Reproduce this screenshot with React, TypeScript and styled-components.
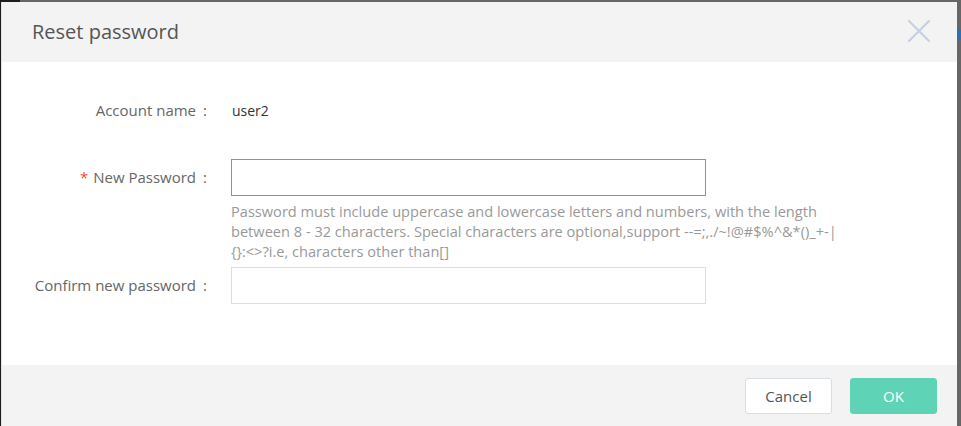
import React from "react";
import styled, { createGlobalStyle } from "styled-components";

const Global = createGlobalStyle`
  html, body { margin: 0; padding: 0; background: #5a5a5a; }
  body { font-family: "Open Sans", "Noto Sans", Arial, sans-serif; }
  * { box-sizing: border-box; }
`;

const Backdrop = styled.div`
  width: 961px;
  height: 426px;
  overflow: hidden;
  background: linear-gradient(to right, #1c1c1c 0 20px, #666 20px);
  padding: 2px 4px 0 1px;
  position: relative;
`;

const RightStrip = styled.div`
  position: absolute;
  right: 0;
  top: 30px;
  width: 4px;
  height: 10px;
  background: #2d6fb0;
`;

const Dialog = styled.div`
  width: 956px;
  height: 424px;
  background: #fff;
  border-left: 1px solid #e3e3e3;
  display: flex;
  flex-direction: column;
  position: relative;
  z-index: 1;
`;

const Header = styled.div`
  height: 60px;
  flex: none;
  background: #f3f3f3;
  display: flex;
  align-items: center;
  justify-content: space-between;
  padding: 0 26px 0 30px;
`;

const Title = styled.div`
  font-size: 20px;
  color: #555;
  margin-top: -2px;
`;

const CloseBtn = styled.button`
  border: 0;
  background: transparent;
  padding: 0;
  width: 24px;
  height: 24px;
  display: flex;
  align-items: center;
  justify-content: center;
  cursor: pointer;
  margin-top: -2px;
`;

const Body = styled.div`
  flex: 1;
  padding: 30px 0 0 0;
  display: flex;
  flex-direction: column;
`;

const Row = styled.div<{ $mt?: number }>`
  display: grid;
  grid-template-columns: 205px 1fr;
  column-gap: 24px;
  align-items: start;
  margin-top: ${(p) => p.$mt ?? 0}px;
`;

const Label = styled.label`
  height: 37px;
  display: flex;
  align-items: center;
  justify-content: flex-end;
  font-size: 15px;
  color: #666;
  white-space: nowrap;
  padding-bottom: 2px;
`;

const Colon = styled.span`
  margin-left: 7px;
`;

const Req = styled.span`
  color: #f5483b;
  margin-right: 5px;
`;

const Value = styled.div`
  height: 37px;
  display: flex;
  align-items: center;
  font-size: 14px;
  color: #333;
  padding-left: 1px;
`;

const Field = styled.div`
  display: flex;
  flex-direction: column;
`;

const Input = styled.input<{ $focus?: boolean }>`
  width: 475px;
  height: 37px;
  border: 1px solid ${(p) => (p.$focus ? "#3fa9f5" : "#d6dee8")};
  outline: none;
  background: #fff;
  font-size: 14px;
  padding: 0 8px;
`;

const Hint = styled.div`
  margin-top: 5px;
  font-size: 14.6px;
  line-height: 20px;
  color: #999;
  white-space: nowrap;
`;

const Footer = styled.div`
  height: 61px;
  flex: none;
  background: #f3f3f3;
  display: flex;
  align-items: center;
  justify-content: flex-end;
  gap: 18px;
  padding: 0 20px 0 0;
`;

const Button = styled.button<{ $primary?: boolean }>`
  width: 87px;
  height: 36px;
  border-radius: 3px;
  font-family: inherit;
  font-size: 15px;
  cursor: pointer;
  border: 1px solid ${(p) => (p.$primary ? "#5fd3b6" : "#d6dee8")};
  background: ${(p) => (p.$primary ? "#5fd3b6" : "#fff")};
  color: ${(p) => (p.$primary ? "#fff" : "#555")};
  margin-top: 1px;
`;

export default function App() {
  return (
    <>
      <Global />
      <Backdrop>
        <RightStrip />
        <Dialog>
          <Header>
            <Title>Reset password</Title>
            <CloseBtn aria-label="Close">
              <svg width="22" height="22" viewBox="0 0 22 22">
                <path
                  d="M1 1 L21 21 M21 1 L1 21"
                  stroke="#c3d1e2"
                  strokeWidth="2.2"
                  strokeLinecap="round"
                />
              </svg>
            </CloseBtn>
          </Header>
          <Body>
            <Row>
              <Label>
                Account name<Colon>:</Colon>
              </Label>
              <Value>user2</Value>
            </Row>
            <Row $mt={30}>
              <Label>
                <Req>*</Req>New Password<Colon>:</Colon>
              </Label>
              <Field>
                <Input type="password" $focus />
                <Hint>
                  Password must include uppercase and lowercase letters and numbers, with the length
                  <br />
                  between 8 - 32 characters. Special characters are optional,support --=;,./~!@#$%^&amp;*()_+-|
                  <br />
                  {"{}:<>?i.e, characters other than[]"}
                </Hint>
              </Field>
            </Row>
            <Row $mt={6}>
              <Label>
                Confirm new password<Colon>:</Colon>
              </Label>
              <Field>
                <Input type="password" />
              </Field>
            </Row>
          </Body>
          <Footer>
            <Button>Cancel</Button>
            <Button $primary>OK</Button>
          </Footer>
        </Dialog>
      </Backdrop>
    </>
  );
}
